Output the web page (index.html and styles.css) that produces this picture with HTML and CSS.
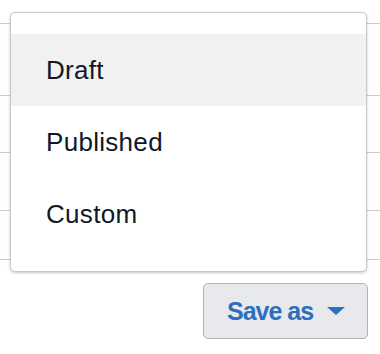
FILE: index.html
```html
<!DOCTYPE html>
<html>
  <head>
    <meta charset="utf8" />
    <title> Save as </title>
    <link rel="stylesheet" href="styles.css">
  </head>
  <body>
    <div class="rows">
      <div class="row r1"></div>
      <div class="row r2"></div>
      <div class="row r3"></div>
      <div class="row r4"></div>
      <div class="row r5"></div>
    </div>
    <div class="toolbar">
      <div class="dropdown">
        <ul class="menu">
          <li class="item active">Draft</li>
          <li class="item">Published</li>
          <li class="item">Custom</li>
        </ul>
        <button class="save">Save as <span class="caret"></span></button>
      </div>
    </div>
  </body>
</html>
```

FILE: styles.css
```css
body {
  margin: 0;
  background: #fff;
  font-family: "Liberation Sans", Arial, sans-serif;
}

.rows .row {
  border-bottom: 1px solid #c9cacd;
}
.r1 { height: 23px; }
.r2 { height: 71px; }
.r3 { height: 56px; }
.r4 { height: 57px; }
.r5 { height: 48px; }

.toolbar {
  display: flex;
  justify-content: flex-end;
  padding: 23px 12px 0 0;
}

.dropdown {
  position: relative;
}

.menu {
  position: absolute;
  right: 1px;
  bottom: calc(100% + 11px);
  box-sizing: border-box;
  width: 357px;
  margin: 0;
  padding: 21px 0;
  list-style: none;
  background: #fff;
  border: 1px solid #c6c8cc;
  border-radius: 5px;
  box-shadow: 0 1px 3px rgba(0, 0, 0, 0.22);
}

.item {
  height: 72px;
  line-height: 72px;
  padding-left: 35px;
  font-size: 26px;
  letter-spacing: 0.3px;
  color: #101828;
}

.item.active {
  background: #f1f1f1;
}

.save {
  display: flex;
  align-items: center;
  box-sizing: border-box;
  width: 165px;
  height: 56px;
  padding: 0 22px 0 23px;
  background: #e8e9ec;
  border: 1px solid #aeb1b6;
  border-radius: 5px;
  font-family: "Liberation Sans", Arial, sans-serif;
  font-weight: bold;
  font-size: 25px;
  letter-spacing: -1px;
  color: #2b6fbd;
}

.caret {
  margin-left: auto;
  width: 0;
  height: 0;
  border-left: 9px solid transparent;
  border-right: 9px solid transparent;
  border-top: 8px solid #2b6fbd;
}
```
